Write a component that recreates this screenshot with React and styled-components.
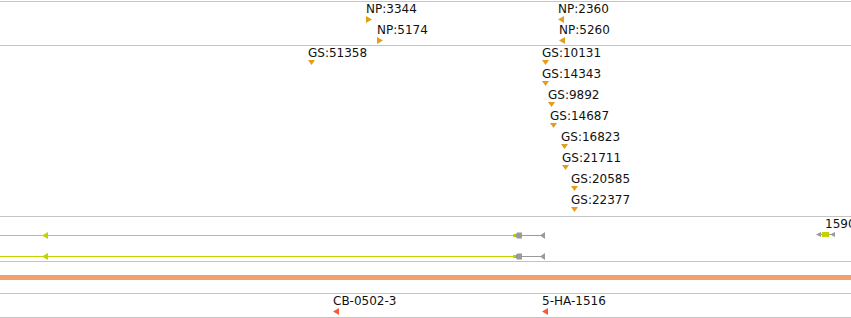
import React from 'react'
import styled, { createGlobalStyle } from 'styled-components'

const GlobalStyle = createGlobalStyle`
  html, body {
    margin: 0;
    padding: 0;
    background: #fff;
    overflow: hidden;
  }
  body {
    font-family: 'DejaVu Sans', 'Liberation Sans', sans-serif;
    font-size: 12px;
    color: #111;
  }
`

const ROW = 21
const GOLD = '#e49c1c'
const LIME = '#c2d300'
const GENE_GRAY = '#9a9a9a'
const RED = '#f25c3a'

const npFeatures = [
  { label: 'NP:3344', x: 366, row: 0, dir: 'right' },
  { label: 'NP:5174', x: 377, row: 1, dir: 'right' },
  { label: 'NP:2360', x: 558, row: 0, dir: 'left' },
  { label: 'NP:5260', x: 559, row: 1, dir: 'left' },
]

const gsFeatures = [
  { label: 'GS:51358', x: 308, row: 0 },
  { label: 'GS:10131', x: 542, row: 0 },
  { label: 'GS:14343', x: 542, row: 1 },
  { label: 'GS:9892', x: 548, row: 2 },
  { label: 'GS:14687', x: 550, row: 3 },
  { label: 'GS:16823', x: 561, row: 4 },
  { label: 'GS:21711', x: 562, row: 5 },
  { label: 'GS:20585', x: 571, row: 6 },
  { label: 'GS:22377', x: 571, row: 7 },
].map((f) => ({ ...f, dir: 'down' }))

const cloneFeatures = [
  { label: 'CB-0502-3', x: 333, row: 0, dir: 'left' },
  { label: '5-HA-1516', x: 542, row: 0, dir: 'left' },
]

function Marker({ dir, color }) {
  if (dir === 'down') {
    return (
      <svg width="8" height="5" viewBox="0 0 8 5">
        <polygon points="0,0 7,0 3.5,5" fill={color} />
      </svg>
    )
  }
  if (dir === 'right') {
    return (
      <svg width="6" height="7" viewBox="0 0 6 7">
        <polygon points="0,0 6,3.5 0,7" fill={color} />
      </svg>
    )
  }
  return (
    <svg width="6" height="7" viewBox="0 0 6 7">
      <polygon points="6,0 0,3.5 6,7" fill={color} />
    </svg>
  )
}

function Feature({ label, x, row, dir, color }) {
  return (
    <FeatureBox style={{ left: x, top: row * ROW }}>
      <Label>{label}</Label>
      <MarkerSlot>
        <Marker dir={dir} color={color} />
      </MarkerSlot>
    </FeatureBox>
  )
}

// long transcript: lime intron line, lime arrow near left, grey exon + grey tail
function LongGene({ top }) {
  return (
    <GeneSvg style={{ top }} width="851" height="9" viewBox="0 0 851 9">
      <rect x="0" y="4" width="514" height="1" fill={LIME} />
      <polygon points="48,1 42,4.5 48,8" fill={LIME} />
      <rect x="513" y="3" width="3" height="3" fill={LIME} />
      <polygon points="515,4.5 517,1.5 522,1.5 522,7.5 517,7.5" fill={GENE_GRAY} />
      <rect x="522" y="4" width="20" height="1" fill={GENE_GRAY} />
      <polygon points="545,1 540,4.5 545,8" fill={GENE_GRAY} />
    </GeneSvg>
  )
}

function ShortGene({ x, top }) {
  return (
    <GeneSvg style={{ left: x, top }} width="20" height="9" viewBox="0 0 20 9">
      <polygon points="5,2 0,4.5 5,7" fill={GENE_GRAY} />
      <rect x="4" y="4" width="3" height="1" fill={GENE_GRAY} />
      <rect x="6" y="2" width="7" height="5" fill={LIME} />
      <rect x="13" y="4" width="2" height="1" fill={GENE_GRAY} />
      <polygon points="19,2 14,4.5 19,7" fill={GENE_GRAY} />
    </GeneSvg>
  )
}

export default function App() {
  return (
    <>
      <GlobalStyle />
      <Browser>
        <Track $height={43}>
          {npFeatures.map((f) => (
            <Feature key={f.label} {...f} color={GOLD} />
          ))}
        </Track>
        <Track $height={170}>
          {gsFeatures.map((f) => (
            <Feature key={f.label} {...f} color={GOLD} />
          ))}
        </Track>
        <Track $height={44}>
          <FeatureBox style={{ left: 825, top: 0 }}>
            <Label>15903</Label>
          </FeatureBox>
          <ShortGene x={816} top={13} />
          <LongGene top={14} />
          <LongGene top={35} />
        </Track>
        <Track $height={31}>
          <CoverageBar />
        </Track>
        <Track $height={23} $last>
          {cloneFeatures.map((f) => (
            <Feature key={f.label} {...f} color={RED} />
          ))}
        </Track>
      </Browser>
    </>
  )
}

const Browser = styled.main`
  display: flex;
  flex-direction: column;
  width: 851px;
  padding-top: 1px;
`

const Track = styled.section`
  position: relative;
  height: ${(p) => p.$height}px;
  border-top: 1px solid #c4c4c4;
  border-bottom: ${(p) => (p.$last ? '1px solid #c4c4c4' : 'none')};
  overflow: hidden;
`

const FeatureBox = styled.div`
  position: absolute;
  display: flex;
  flex-direction: column;
  align-items: flex-start;
  white-space: nowrap;
`

const Label = styled.span`
  display: block;
  height: 14px;
  line-height: 14px;
  font-size: 12px;
  color: #111;
`

const MarkerSlot = styled.div`
  display: flex;
  height: 7px;
  align-items: flex-start;
`

const GeneSvg = styled.svg`
  position: absolute;
  left: 0;
  display: block;
`

const CoverageBar = styled.div`
  margin-top: 13px;
  height: 5px;
  background: #f2a06e;
`
